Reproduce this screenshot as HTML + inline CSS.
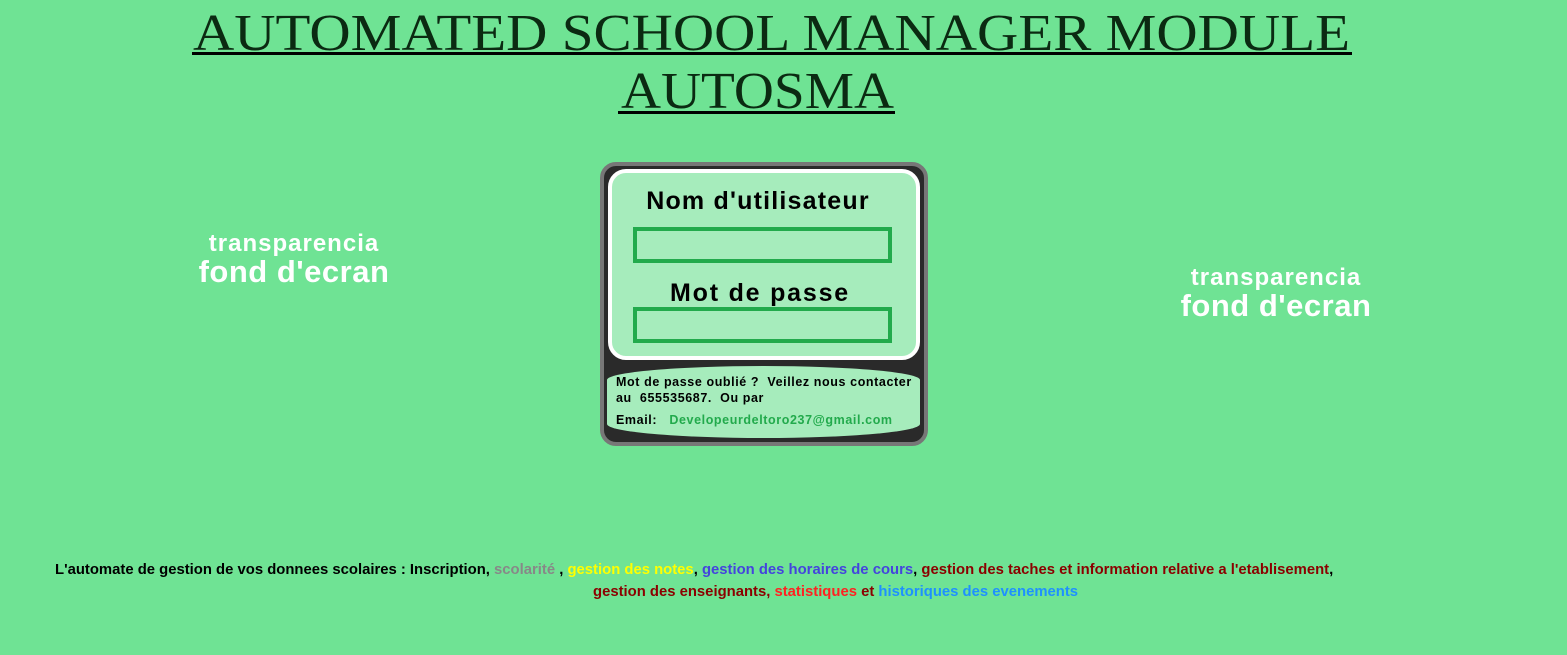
<!DOCTYPE html>
<html><head><meta charset="utf-8"><style>
body{margin:0;width:1567px;height:655px;background:#6fe394;position:relative;overflow:hidden;font-family:"Liberation Sans",Arial,sans-serif}
.a{position:absolute}
.tr{color:#fff;font-weight:bold;text-align:center;line-height:1}
</style></head><body>
<svg class="a" style="left:0;top:0" width="1567" height="130">
<text x="193" y="50" textLength="1157" lengthAdjust="spacingAndGlyphs" font-family="Liberation Serif" font-size="52" fill="#0b2a12">AUTOMATED SCHOOL MANAGER MODULE</text>
<rect x="192" y="52" width="1160" height="3" fill="#000"/>
<text x="621" y="108" textLength="273" lengthAdjust="spacingAndGlyphs" font-family="Liberation Serif" font-size="52" fill="#0b2a12">AUTOSMA</text>
<rect x="618" y="111" width="277" height="3" fill="#000"/>
</svg>
<div class="a tr" style="left:184px;top:232px;width:220px;font-size:24px;letter-spacing:1px">transparencia<br><span style="font-size:31px;letter-spacing:0.5px">fond d'ecran</span></div>
<div class="a tr" style="left:1166px;top:266px;width:220px;font-size:24px;letter-spacing:1px">transparencia<br><span style="font-size:31px;letter-spacing:0.5px">fond d'ecran</span></div>
<div class="a" style="left:600px;top:162px;width:320px;height:276px;border:4px solid #777;border-radius:16px;background:#2a2a2a"></div>
<div class="a" style="left:608px;top:169px;width:304px;height:183px;border:4px solid #fff;border-radius:18px;background:#a6ecbc"></div>
<div class="a" style="left:607px;top:366px;width:313px;height:72px;border-radius:50%/14px;background:#a6ecbc"></div>
<div class="a" style="left:604px;top:187px;width:308px;text-align:center;font-weight:bold;font-size:25px;color:#000;letter-spacing:1.2px">Nom d'utilisateur</div>
<div class="a" style="left:633px;top:227px;width:251px;height:28px;border:4px solid #22aa4c"></div>
<div class="a" style="left:606px;top:279px;width:308px;text-align:center;font-weight:bold;font-size:25px;color:#000;letter-spacing:1.8px">Mot de passe</div>
<div class="a" style="left:633px;top:307px;width:251px;height:28px;border:4px solid #22aa4c"></div>
<div class="a" style="left:616px;top:374px;font-size:12.5px;font-weight:bold;line-height:16px;color:#000;white-space:nowrap;letter-spacing:0.6px">Mot de passe oublié ?&nbsp; Veillez nous contacter<br>au&nbsp; 655535687.&nbsp; Ou par</div>
<div class="a" style="left:616px;top:413px;font-size:12.5px;font-weight:bold;color:#000;white-space:nowrap;letter-spacing:0.6px">Email:&nbsp;&nbsp; <span style="color:#22aa4c">Developeurdeltoro237@gmail.com</span></div>
<div class="a" style="left:55px;top:562px;font-size:14.85px;font-weight:bold;white-space:nowrap;color:#000">L'automate de gestion de vos donnees scolaires : Inscription, <span style="color:#888">scolarité</span> , <span style="color:#ff0">gestion des notes</span>, <span style="color:#4444dd">gestion des horaires de cours</span>, <span style="color:#8b0000">gestion des taches et information relative a l'etablisement</span>,</div>
<div class="a" style="left:593px;top:584px;font-size:14.85px;font-weight:bold;white-space:nowrap;color:#8b0000">gestion des enseignants, <span style="color:#ff2222">statistiques</span> et <span style="color:#1e90ff">historiques des evenements</span></div>
</body></html>
